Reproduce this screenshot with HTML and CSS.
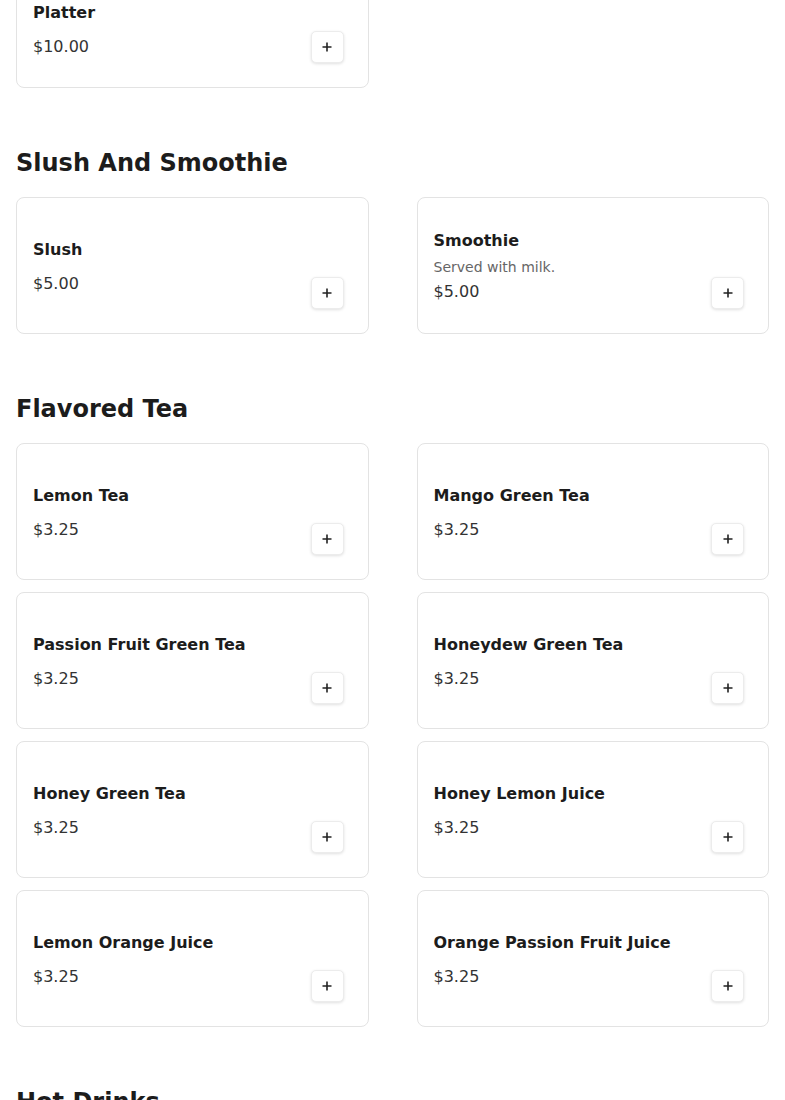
FILE: index.html
```html
<!DOCTYPE html>
<html lang="en">
<head>
<meta charset="utf-8">
<title>Menu</title>
<link rel="stylesheet" href="styles.css">
</head>
<body>
<main class="menu">
  <section class="section section-first">
    <div class="grid">
      <div class="card">
        <div class="info">
          <div class="name">Crispy Chicken Wings And Fries Platter</div>
          <div class="price">$10.00</div>
        </div>
        <button class="add" aria-label="Add"><svg viewBox="0 0 12 12" width="12" height="12"><path d="M6 1.5v9M1.5 6h9" stroke="#222" stroke-width="1.6" fill="none"/></svg></button>
      </div>
    </div>
  </section>

  <section class="section">
    <h2 class="heading">Slush And Smoothie</h2>
    <div class="grid">
      <div class="card">
        <div class="info">
          <div class="name">Slush</div>
          <div class="price">$5.00</div>
        </div>
        <button class="add" aria-label="Add"><svg viewBox="0 0 12 12" width="12" height="12"><path d="M6 1.5v9M1.5 6h9" stroke="#222" stroke-width="1.6" fill="none"/></svg></button>
      </div>
      <div class="card">
        <div class="info">
          <div class="name">Smoothie</div>
          <div class="desc">Served with milk.</div>
          <div class="price">$5.00</div>
        </div>
        <button class="add" aria-label="Add"><svg viewBox="0 0 12 12" width="12" height="12"><path d="M6 1.5v9M1.5 6h9" stroke="#222" stroke-width="1.6" fill="none"/></svg></button>
      </div>
    </div>
  </section>

  <section class="section">
    <h2 class="heading">Flavored Tea</h2>
    <div class="grid">
      <div class="card">
        <div class="info">
          <div class="name">Lemon Tea</div>
          <div class="price">$3.25</div>
        </div>
        <button class="add" aria-label="Add"><svg viewBox="0 0 12 12" width="12" height="12"><path d="M6 1.5v9M1.5 6h9" stroke="#222" stroke-width="1.6" fill="none"/></svg></button>
      </div>
      <div class="card">
        <div class="info">
          <div class="name">Mango Green Tea</div>
          <div class="price">$3.25</div>
        </div>
        <button class="add" aria-label="Add"><svg viewBox="0 0 12 12" width="12" height="12"><path d="M6 1.5v9M1.5 6h9" stroke="#222" stroke-width="1.6" fill="none"/></svg></button>
      </div>
      <div class="card">
        <div class="info">
          <div class="name">Passion Fruit Green Tea</div>
          <div class="price">$3.25</div>
        </div>
        <button class="add" aria-label="Add"><svg viewBox="0 0 12 12" width="12" height="12"><path d="M6 1.5v9M1.5 6h9" stroke="#222" stroke-width="1.6" fill="none"/></svg></button>
      </div>
      <div class="card">
        <div class="info">
          <div class="name">Honeydew Green Tea</div>
          <div class="price">$3.25</div>
        </div>
        <button class="add" aria-label="Add"><svg viewBox="0 0 12 12" width="12" height="12"><path d="M6 1.5v9M1.5 6h9" stroke="#222" stroke-width="1.6" fill="none"/></svg></button>
      </div>
      <div class="card">
        <div class="info">
          <div class="name">Honey Green Tea</div>
          <div class="price">$3.25</div>
        </div>
        <button class="add" aria-label="Add"><svg viewBox="0 0 12 12" width="12" height="12"><path d="M6 1.5v9M1.5 6h9" stroke="#222" stroke-width="1.6" fill="none"/></svg></button>
      </div>
      <div class="card">
        <div class="info">
          <div class="name">Honey Lemon Juice</div>
          <div class="price">$3.25</div>
        </div>
        <button class="add" aria-label="Add"><svg viewBox="0 0 12 12" width="12" height="12"><path d="M6 1.5v9M1.5 6h9" stroke="#222" stroke-width="1.6" fill="none"/></svg></button>
      </div>
      <div class="card">
        <div class="info">
          <div class="name">Lemon Orange Juice</div>
          <div class="price">$3.25</div>
        </div>
        <button class="add" aria-label="Add"><svg viewBox="0 0 12 12" width="12" height="12"><path d="M6 1.5v9M1.5 6h9" stroke="#222" stroke-width="1.6" fill="none"/></svg></button>
      </div>
      <div class="card">
        <div class="info">
          <div class="name">Orange Passion Fruit Juice</div>
          <div class="price">$3.25</div>
        </div>
        <button class="add" aria-label="Add"><svg viewBox="0 0 12 12" width="12" height="12"><path d="M6 1.5v9M1.5 6h9" stroke="#222" stroke-width="1.6" fill="none"/></svg></button>
      </div>
    </div>
  </section>

  <section class="section">
    <h2 class="heading">Hot Drinks</h2>
  </section>
</main>
</body>
</html>
```

FILE: styles.css
```css
* {
  box-sizing: border-box;
}

html, body {
  margin: 0;
  padding: 0;
  background: #ffffff;
}

body {
  font-family: "DejaVu Sans", "Noto Sans", sans-serif;
  color: #1c1c1c;
  overflow: hidden;
}

.menu {
  padding: 0 16px;
}

.section {
  margin-top: 59px;
}

.section-first {
  margin-top: -52px;
}

.heading {
  margin: 0 0 18px;
  font-size: 24px;
  line-height: 32px;
  font-weight: bold;
  color: #1c1c1c;
}

.grid {
  display: grid;
  grid-template-columns: 1fr 1fr;
  column-gap: 48px;
  row-gap: 12px;
}

.card {
  display: grid;
  grid-template-columns: 1fr;
  grid-template-rows: minmax(103px, auto);
  padding: 16px;
  border: 1px solid #e3e3e3;
  border-radius: 8px;
  background: #fff;
}

.info {
  grid-area: 1 / 1;
  align-self: center;
  padding: 15px 0 12px;
}

.name {
  font-size: 16px;
  line-height: 22px;
  font-weight: bold;
  color: #1c1c1c;
}

.desc {
  margin-top: 5px;
  font-size: 14px;
  line-height: 20px;
  color: #666;
}

.price {
  font-size: 16px;
  line-height: 24px;
  color: #333;
}

.name + .price {
  margin-top: 11px;
}

.desc + .price {
  margin-top: 3px;
}

.add {
  grid-area: 1 / 1;
  align-self: end;
  justify-self: end;
  margin: 0 8px 8px 0;
  width: 33px;
  height: 32px;
  padding: 0;
  display: flex;
  align-items: center;
  justify-content: center;
  background: #fff;
  border: 1px solid #ececec;
  border-radius: 5px;
  box-shadow: 0 1px 3px rgba(0, 0, 0, 0.12);
  cursor: pointer;
}

.add svg {
  display: block;
  width: 12px;
  height: 12px;
}
```
